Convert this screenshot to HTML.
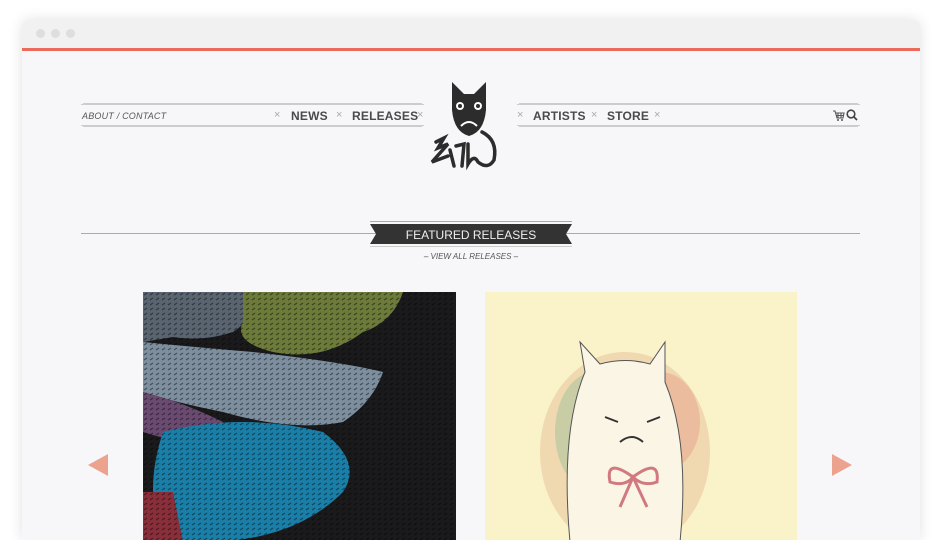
<!DOCTYPE html>
<html><head><style>
body{margin:0;width:941px;height:521px;background:#fff;overflow:hidden;position:relative;font-family:"Liberation Sans",sans-serif}
.win{position:absolute;left:22px;top:20px;width:898px;height:520px;background:#f7f7f9;border-radius:6px 6px 0 0;box-shadow:0 0 14px rgba(0,0,0,.12);overflow:hidden}
.bar{height:28px;background:#f1f1f1;position:relative;border-bottom:3px solid #ec6a5c}
.dot{position:absolute;top:9px;width:9px;height:9px;border-radius:50%;background:#dedede}
.nav{position:absolute;top:84px;height:20px;border-top:1px solid #ccc;border-bottom:1px solid #ccc;box-shadow:0 -3px 0 -2px #ccc,0 3px 0 -2px #ccc}
.nav span{position:absolute;top:4px;font-size:12px;color:#4a4a4a;font-weight:bold;letter-spacing:.2px}
.nav i{position:absolute;top:4px;font-style:normal;font-size:11px;color:#aaa}
.ab{font-size:9px!important;font-style:italic;font-weight:normal!important;color:#555!important;top:6px!important}
</style></head><body>
<div class="win">
<div class="bar"><div class="dot" style="left:14px"></div><div class="dot" style="left:29px"></div><div class="dot" style="left:44px"></div></div>
<div class="nav" style="left:59px;width:343px">
<span class="ab" style="left:1px">ABOUT / CONTACT</span>
<i style="left:193px">×</i><span style="left:210px">NEWS</span>
<i style="left:255px">×</i><span style="left:271px">RELEASES</span>
<i style="left:336px">×</i>
</div>
<div class="nav" style="left:495px;width:343px">
<i style="left:0px">×</i><span style="left:16px">ARTISTS</span>
<i style="left:74px">×</i><span style="left:90px">STORE</span>
<i style="left:137px">×</i>
<svg style="position:absolute;left:316px;top:5px" width="12" height="11"><path d="M0 1 H2 L4 8 H10 L11 3 H3 M5 3 V8 M8 3 V8 M3 5.5 H11" fill="none" stroke="#555" stroke-width="1.1"/><circle cx="5" cy="10" r="1" fill="#555"/><circle cx="9" cy="10" r="1" fill="#555"/></svg>
<svg style="position:absolute;left:329px;top:4px" width="12" height="12"><circle cx="5" cy="5" r="3.8" fill="none" stroke="#444" stroke-width="1.6"/><line x1="8" y1="8" x2="11" y2="11" stroke="#444" stroke-width="1.8"/></svg>
</div>
<svg style="position:absolute;left:402px;top:60px" width="90" height="92" viewBox="0 0 90 92">
<path d="M28 2 L40 14 L50 14 L62 2 L62 30 Q60 52 45 56 Q30 52 28 30Z" fill="#2c2c2c"/>
<circle cx="36" cy="26" r="4" fill="#fff"/><circle cx="54" cy="26" r="4" fill="#fff"/>
<circle cx="36" cy="26" r="2" fill="#2c2c2c"/><circle cx="54" cy="26" r="2" fill="#2c2c2c"/>
<path d="M37 46 Q45 38 53 46" fill="none" stroke="#fff" stroke-width="2"/>
<path d="M12 62 L20 58 L14 68 L24 64 L8 82 L24 76 M26 70 L30 86 M32 66 L40 64 L38 86 M44 64 L44 84 Q50 74 54 82 Q64 90 70 80 Q74 60 58 52" fill="none" stroke="#2c2c2c" stroke-width="3.5" stroke-linecap="round"/>
</svg>
<div style="position:absolute;left:59px;top:213px;width:779px;border-top:1px solid #aaa"></div>
<div style="position:absolute;left:348px;top:201px;width:202px;height:24px;border-top:1px solid #aaa;border-bottom:1px solid #ccc"></div>
<svg style="position:absolute;left:348px;top:204px" width="202" height="20"><polygon points="0,0 202,0 196,10 202,20 0,20 6,10" fill="#333"/><text x="101" y="15" text-anchor="middle" fill="#eee" font-size="12" font-family="Liberation Sans">FEATURED RELEASES</text></svg>
<div style="position:absolute;left:0;width:898px;top:232px;text-align:center;font-size:8px;color:#555;font-style:italic">– VIEW ALL RELEASES –</div>
<div style="position:absolute;left:121px;top:272px;width:313px;height:250px;background:#1a1a1c;overflow:hidden">
<svg width="313" height="250"><defs><pattern id="p" width="6" height="5" patternUnits="userSpaceOnUse"><path d="M1 3 L4 1" stroke="#000" stroke-opacity=".45" stroke-width="1.2"/></pattern></defs><path d="M0 0 L100 0 Q120 20 90 40 Q60 50 30 45 L0 50Z" fill="#5a6470"/><path d="M100 0 L260 0 Q250 30 220 40 Q180 70 130 60 Q90 50 100 30Z" fill="#6c7a3a"/><path d="M0 50 Q50 55 110 60 Q200 70 240 80 Q230 110 200 130 Q150 140 80 120 Q30 110 0 100Z" fill="#7d8f9f"/><path d="M0 100 Q40 110 80 130 L60 150 Q30 150 0 140Z" fill="#6a4a70"/><path d="M20 140 Q100 120 180 140 Q220 170 200 200 Q150 250 60 250 L20 250 Q0 200 20 140Z" fill="#1a7fa8"/><path d="M0 200 L30 200 L40 250 L0 250Z" fill="#8a2f3a"/><rect width="313" height="250" fill="url(#p)"/></svg>
</div>
<div style="position:absolute;left:463px;top:272px;width:312px;height:250px;background:#faf2c8;overflow:hidden">
<svg width="312" height="250"><ellipse cx="140" cy="160" rx="85" ry="100" fill="#e9c7a0" opacity=".6"/><ellipse cx="110" cy="140" rx="40" ry="60" fill="#9fc29a" opacity=".5"/><ellipse cx="175" cy="130" rx="40" ry="50" fill="#e6a08a" opacity=".5"/><path d="M85 250 Q75 140 100 80 L95 50 L115 72 Q140 65 165 72 L180 50 L180 90 Q205 150 195 250Z" fill="#fbf5e6" stroke="#555" stroke-width="1"/><path d="M120 125 L133 130 M175 125 L162 130 M135 150 Q147 140 158 150" stroke="#333" stroke-width="2" fill="none"/><path d="M148 185 Q120 165 125 190 Q140 195 148 185 Q175 165 172 190 Q158 195 148 185 L135 215 M148 185 L162 215" stroke="#d07a80" stroke-width="3" fill="none"/></svg>
</div>
<svg style="position:absolute;left:66px;top:434px" width="20" height="22"><polygon points="20,0 20,22 0,11" fill="#eba38e"/></svg>
<svg style="position:absolute;left:810px;top:434px" width="20" height="22"><polygon points="0,0 0,22 20,11" fill="#eba38e"/></svg>
</div>
</body></html>
